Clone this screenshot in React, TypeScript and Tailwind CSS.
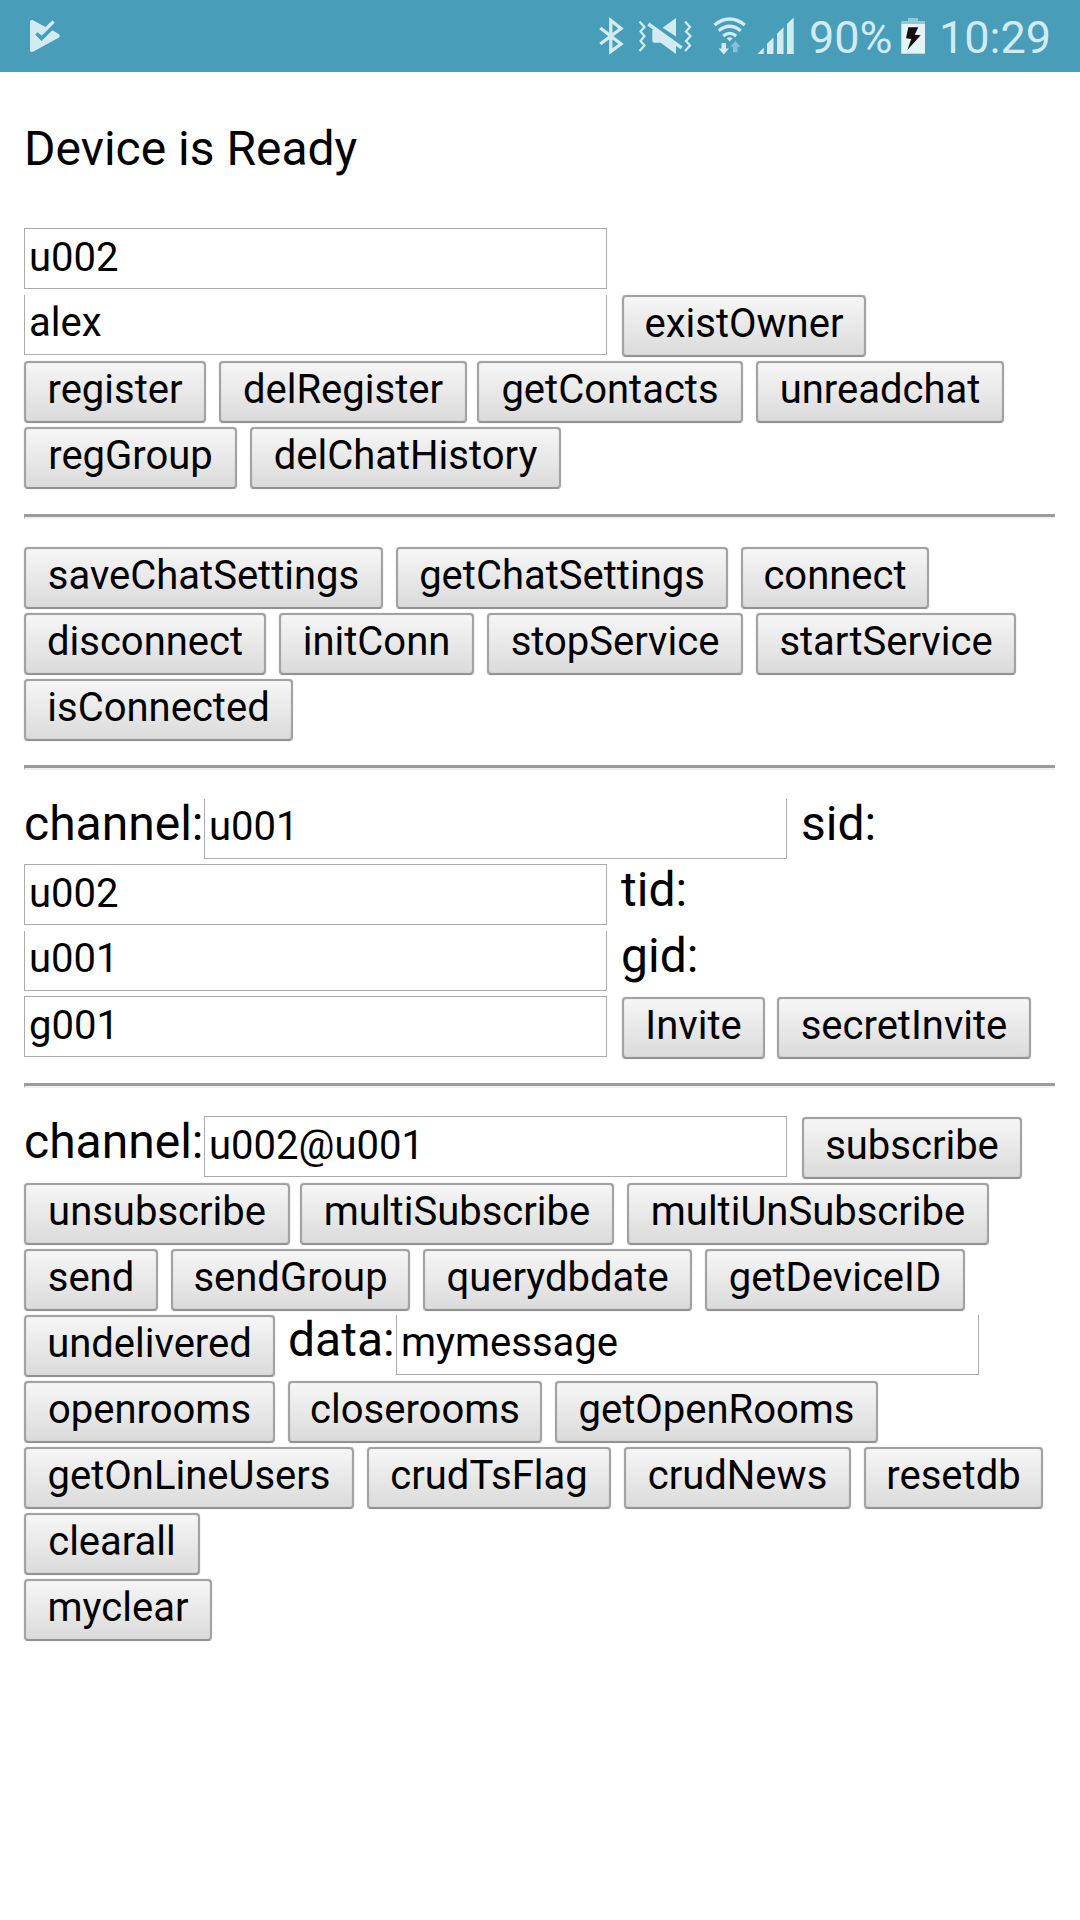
import React from "react";

const INK = "#d2ebf1";

function Btn({ w, children }: { w: string; children: React.ReactNode }) {
  return (
    <button
      className={`${w} mt-px h-[62px] shrink-0 whitespace-nowrap rounded-[4px] border-2 border-[#a3a3a3] border-b-[#929292] bg-linear-to-b from-[#f6f6f6] to-[#dbdbdb] text-center text-[40px] leading-[53px] text-black shadow-[0_0_1px_rgba(0,0,0,0.4),inset_0_0_1px_rgba(0,0,0,0.3)]`}
    >
      <span className="block h-[58px]">{children}</span>
    </button>
  );
}

function Field({ value, open = false }: { value: string; open?: boolean }) {
  return (
    <input
      readOnly
      value={value}
      className={`${
        open ? "mt-px h-[60px] border-t-0 pb-[4px]" : "h-[61px] border-t pb-[3px]"
      } w-[583px] shrink-0 border-x border-b border-[#ababab] bg-white pl-[4px] text-[40px] leading-[54px] text-black outline-none`}
    />
  );
}

function Label({ children, className = "" }: { children: React.ReactNode; className?: string }) {
  return <span className={`${className} shrink-0 whitespace-nowrap text-[48px] leading-[52px]`}>{children}</span>;
}

function Row({ children, gap = "gap-[13px]" }: { children: React.ReactNode; gap?: string }) {
  return <div className={`flex h-[66px] items-start ${gap}`}>{children}</div>;
}

function Rule({ className }: { className: string }) {
  return (
    <div
      className={`${className} h-[5px] w-[1031px] border-t-[3px] border-b-2 border-l border-t-[#9c9c9c] border-b-[#f0f0f0] border-l-[#9c9c9c]`}
    />
  );
}

function StatusBar() {
  return (
    <header className="flex h-[72px] items-start bg-[#489db9] text-[45px] leading-[75px] text-[#d2ebf1]">
      <svg className="ml-[30px] mt-[19px] shrink-0" width="31" height="34" viewBox="30 19 31 34" fill={INK}>
        <path d="M30 21.5Q30 19.5 32.5 20L45.5 27L52.5 20.3L54.7 22.7L41.8 35.8L37.5 32.3L35.2 34.5L41.5 41L51.5 31L53 30.6L59 34.2Q60.8 36 59 37.6L33.5 51.6Q30 53 30 50Z" />
      </svg>
      <svg className="ml-[537px] mt-[17px] shrink-0" width="28" height="38" viewBox="598 17 28 38" fill="none" stroke={INK} strokeWidth="3.3">
        <path d="M600.3 28L621 44L610.8 51.5V20.5L621 28.5L600.3 44" />
      </svg>
      <svg className="ml-[11px] mt-[17px] shrink-0" width="57" height="38" viewBox="637 17 57 38" fill={INK}>
        <path d="M639.5 21.5l5 5.5-4 4.5 4 4.5-4 5 4 4.5-5 5.5M685 21.5l5 5.5-4 4.5 4.5 4.5-4.5 5 4 4.5-5 5.5" fill="none" stroke={INK} strokeWidth="2.2" />
        <path d="M676 18V36.6L662.6 27.8ZM652.3 30H657L676 42V54L660.7 42.8H654.5Q652.3 42.8 652.3 40Z" />
        <path d="M648.3 24L681.7 47.8" stroke={INK} strokeWidth="3.4" />
      </svg>
      <svg className="ml-[18px] mt-[16px] shrink-0" width="36" height="39" viewBox="712 16 36 39" fill="none">
        <path d="M714.5 25Q729.7 13 744.8 25M718.7 30.7Q729.7 21.8 740.7 30.7M723.2 36Q729.7 30.6 736.2 36" stroke={INK} strokeWidth="3.2" />
        <path d="M726.7 38.3Q729.7 36 732.7 38.3L729.7 41.5Z" fill={INK} />
        <path d="M721.5 43H726V48.5H729L723.7 54.5L718.5 48.5H721.5Z" fill={INK} />
        <path d="M733 52.3H737.6V46.7H740.5L735.4 41L730 46.7H733Z" fill="#83c3d5" />
      </svg>
      <svg className="ml-[9px] mt-[17px] shrink-0" width="38" height="38" viewBox="757 17 38 38" fill={INK}>
        <path d="M757.5 54L763.7 47.5V54ZM767 54V43.8L773.5 37.5V54ZM777 54V33.8L783.5 27.3V54ZM787 54V24L793.7 17.5V54Z" />
      </svg>
      <span className="ml-[14px] w-[92px] shrink-0 whitespace-nowrap">90%</span>
      <svg className="mt-[17px] shrink-0" width="25" height="38" viewBox="901 17 25 38">
        <path d="M908 18h10v3h7v4h-23.700v-4H908Z" fill="#92c9d9" />
        <path d="M901.3 24H925V53.7H901.3Z" fill="#e2f4f6" />
        <path d="M908.3 27.300H918.300L914.700 34.700L920.700 35.300L907.300 50L911.300 39L906 38.300Z" fill="#111" />
      </svg>
      <span className="ml-[13px] whitespace-nowrap">10:29</span>
    </header>
  );
}

export default function App() {
  return (
    <div className="h-[1920px] w-[1080px] overflow-hidden bg-white font-['Roboto',sans-serif] text-black">
      <StatusBar />
      <main className="pl-6">
        <p className="mt-[48px] h-[108px] text-[48px] leading-[58px]">Device is Ready</p>

        <section>
          <Row>
            <Field value="u002" />
          </Row>
          <Row gap="gap-[15px]">
            <Field value="alex" open />
            <Btn w="w-[244px]">existOwner</Btn>
          </Row>
          <Row>
            <Btn w="w-[182px]">register</Btn>
            <div className="flex gap-[10px]">
              <Btn w="w-[248px]">delRegister</Btn>
              <Btn w="w-[266px]">getContacts</Btn>
            </div>
            <Btn w="w-[248px]">unreadchat</Btn>
          </Row>
          <Row>
            <Btn w="w-[213px]">regGroup</Btn>
            <Btn w="w-[311px]">delChatHistory</Btn>
          </Row>
        </section>

        <Rule className="mt-[22px]" />

        <section className="mt-[27px]">
          <Row>
            <Btn w="w-[359px]">saveChatSettings</Btn>
            <Btn w="w-[332px]">getChatSettings</Btn>
            <Btn w="w-[188px]">connect</Btn>
          </Row>
          <Row>
            <Btn w="w-[242px]">disconnect</Btn>
            <Btn w="w-[195px]">initConn</Btn>
            <Btn w="w-[256px]">stopService</Btn>
            <Btn w="w-[260px]">startService</Btn>
          </Row>
          <Row>
            <Btn w="w-[269px]">isConnected</Btn>
          </Row>
        </section>

        <Rule className="mt-[21px]" />

        <section className="mt-[28px]">
          <Row gap="gap-0">
            <Label className="w-[180px]">channel:</Label>
            <Field value="u001" open />
            <Label className="ml-[14px]">sid:</Label>
          </Row>
          <Row gap="gap-[14px]">
            <Field value="u002" />
            <Label>tid:</Label>
          </Row>
          <Row gap="gap-[14px]">
            <Field value="u001" open />
            <Label>gid:</Label>
          </Row>
          <Row gap="gap-[15px]">
            <Field value="g001" />
            <div className="flex gap-[12px]">
              <Btn w="w-[143px]">Invite</Btn>
              <Btn w="w-[254px]">secretInvite</Btn>
            </div>
          </Row>
        </section>

        <Rule className="mt-[21px]" />

        <section className="mt-[28px]">
          <Row gap="gap-0">
            <Label className="w-[180px]">channel:</Label>
            <Field value="u002@u001" />
            <div className="ml-[15px]">
              <Btn w="w-[220px]">subscribe</Btn>
            </div>
          </Row>
          <Row>
            <div className="flex gap-[10px]">
              <Btn w="w-[266px]">unsubscribe</Btn>
              <Btn w="w-[314px]">multiSubscribe</Btn>
            </div>
            <Btn w="w-[362px]">multiUnSubscribe</Btn>
          </Row>
          <Row>
            <Btn w="w-[134px]">send</Btn>
            <Btn w="w-[239px]">sendGroup</Btn>
            <Btn w="w-[269px]">querydbdate</Btn>
            <Btn w="w-[260px]">getDeviceID</Btn>
          </Row>
          <Row gap="gap-0">
            <Btn w="w-[251px]">undelivered</Btn>
            <Label className="ml-[13px] w-[108px]">data:</Label>
            <Field value="mymessage" open />
          </Row>
          <Row>
            <Btn w="w-[251px]">openrooms</Btn>
            <Btn w="w-[254px]">closerooms</Btn>
            <Btn w="w-[323px]">getOpenRooms</Btn>
          </Row>
          <Row>
            <Btn w="w-[330px]">getOnLineUsers</Btn>
            <Btn w="w-[244px]">crudTsFlag</Btn>
            <Btn w="w-[227px]">crudNews</Btn>
            <Btn w="w-[179px]">resetdb</Btn>
          </Row>
          <Row>
            <Btn w="w-[176px]">clearall</Btn>
          </Row>
          <Row>
            <Btn w="w-[188px]">myclear</Btn>
          </Row>
        </section>
      </main>
    </div>
  );
}
